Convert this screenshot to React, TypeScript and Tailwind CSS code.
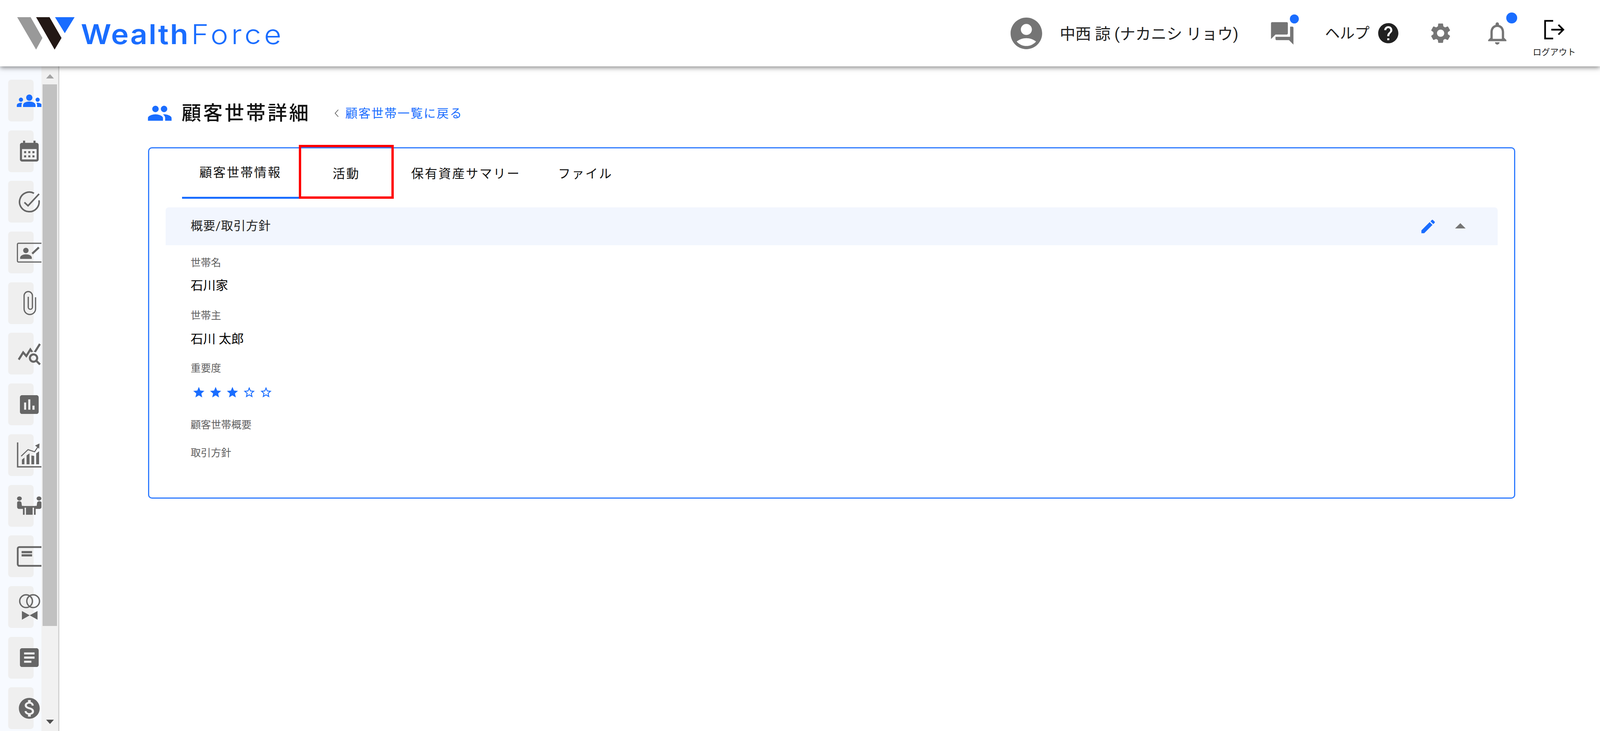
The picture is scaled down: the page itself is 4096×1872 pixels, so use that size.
import type { ReactNode } from "react";

const FONT = { jp: "font-['Roboto','Noto_Sans_CJK_JP',sans-serif]" };

function Mui({ d, className }: { d: string; className: string }) {
  return (
    <svg viewBox="0 0 24 24" fill="currentColor" className={`shrink-0 ${className}`}>
      <path d={d} />
    </svg>
  );
}

const PATHS = {
  account:
    "M12 2C6.48 2 2 6.48 2 12s4.48 10 10 10 10-4.48 10-10S17.52 2 12 2zm0 4c1.93 0 3.5 1.57 3.5 3.5S13.93 13 12 13s-3.5-1.57-3.5-3.5S10.07 6 12 6zm0 14c-2.03 0-4.43-.82-6.14-2.88C7.55 15.8 9.68 15 12 15s4.45.8 6.14 2.12C16.43 19.18 14.03 20 12 20z",
  forum:
    "M21 6h-2v9H6v2c0 .55.45 1 1 1h11l4 4V7c0-.55-.45-1-1-1zm-4 6V3c0-.55-.45-1-1-1H3c-.55 0-1 .45-1 1v14l4-4h10c.55 0 1-.45 1-1z",
  help:
    "M12 2C6.48 2 2 6.48 2 12s4.48 10 10 10 10-4.48 10-10S17.52 2 12 2zm1 17h-2v-2h2v2zm2.07-7.75l-.9.92C13.45 12.9 13 13.5 13 15h-2v-.5c0-1.1.45-2.1 1.17-2.83l1.24-1.26c.37-.36.59-.86.59-1.41 0-1.1-.9-2-2-2s-2 .9-2 2H8c0-2.21 1.79-4 4-4s4 1.79 4 4c0 .88-.36 1.68-.93 2.25z",
  settings:
    "M19.14 12.94c.04-.3.06-.61.06-.94 0-.32-.02-.64-.07-.94l2.03-1.58c.18-.14.23-.41.12-.61l-1.92-3.32c-.12-.22-.37-.29-.59-.22l-2.39.96c-.5-.38-1.03-.7-1.62-.94l-.36-2.54c-.04-.24-.24-.41-.48-.41h-3.84c-.24 0-.43.17-.47.41l-.36 2.54c-.59.24-1.13.57-1.62.94l-2.39-.96c-.22-.08-.47 0-.59.22L2.74 8.87c-.12.21-.08.47.12.61l2.03 1.58c-.05.3-.09.63-.09.94s.02.64.07.94l-2.03 1.58c-.18.14-.23.41-.12.61l1.92 3.32c.12.22.37.29.59.22l2.39-.96c.5.38 1.03.7 1.62.94l.36 2.54c.05.24.24.41.48.41h3.84c.24 0 .44-.17.47-.41l.36-2.54c.59-.24 1.13-.56 1.62-.94l2.39.96c.22.08.47 0 .59-.22l1.92-3.32c.12-.22.07-.47-.12-.61l-2.01-1.58zM12 15.6c-1.98 0-3.6-1.62-3.6-3.6s1.62-3.6 3.6-3.6 3.6 1.62 3.6 3.6-1.62 3.6-3.6 3.6z",
  bell:
    "M12 22c1.1 0 2-.9 2-2h-4c0 1.1.9 2 2 2zm6-6v-5c0-3.07-1.63-5.64-4.5-6.32V4c0-.83-.67-1.5-1.5-1.5s-1.5.67-1.5 1.5v.68C7.64 5.36 6 7.92 6 11v5l-2 2v1h16v-1l-2-2zm-2 1H8v-6c0-2.48 1.51-4.5 4-4.5s4 2.02 4 4.5v6z",
  people:
    "M16 11c1.66 0 2.99-1.34 2.99-3S17.66 5 16 5c-1.66 0-3 1.34-3 3s1.34 3 3 3zm-8 0c1.66 0 2.99-1.34 2.99-3S9.66 5 8 5C6.34 5 5 6.34 5 8s1.34 3 3 3zm0 2c-2.33 0-7 1.17-7 3.5V19h14v-2.5c0-2.33-4.67-3.5-7-3.5zm8 0c-.29 0-.62.02-.97.05 1.16.84 1.97 1.97 1.97 3.45V19h6v-2.5c0-2.33-4.67-3.5-7-3.5z",
  groups:
    "M12 12.75c1.63 0 3.07.39 4.24.9 1.08.48 1.76 1.56 1.76 2.73V18H6v-1.61c0-1.18.68-2.26 1.76-2.73 1.17-.52 2.61-.91 4.24-.91zM4 13c1.1 0 2-.9 2-2s-.9-2-2-2-2 .9-2 2 .9 2 2 2zm1.13 1.1c-.37-.06-.74-.1-1.13-.1-.99 0-1.93.21-2.78.58C.48 14.9 0 15.62 0 16.43V18h4.5v-1.61c0-.83.23-1.61.63-2.29zM20 13c1.1 0 2-.9 2-2s-.9-2-2-2-2 .9-2 2 .9 2 2 2zm4 3.43c0-.81-.48-1.53-1.22-1.85-.85-.37-1.79-.58-2.78-.58-.39 0-.76.04-1.13.1.4.68.63 1.46.63 2.29V18H24v-1.57zM12 6c1.66 0 3 1.34 3 3s-1.34 3-3 3-3-1.34-3-3 1.34-3 3-3z",
  calendar:
    "M19 4h-1V2h-2v2H8V2H6v2H5c-1.11 0-1.99.9-1.99 2L3 20c0 1.1.89 2 2 2h14c1.1 0 2-.9 2-2V6c0-1.1-.9-2-2-2zm0 16H5V10h14v10zM9 14H7v-2h2v2zm4 0h-2v-2h2v2zm4 0h-2v-2h2v2zm-8 4H7v-2h2v2zm4 0h-2v-2h2v2zm4 0h-2v-2h2v2z",
  query:
    "M19.88 18.47c.44-.7.7-1.51.7-2.39 0-2.49-2.01-4.5-4.5-4.5s-4.5 2.01-4.5 4.5 2.01 4.5 4.49 4.5c.88 0 1.7-.26 2.39-.7L21.58 23 23 21.58l-3.12-3.11zm-3.8.11c-1.38 0-2.5-1.12-2.5-2.5s1.12-2.5 2.5-2.5 2.5 1.12 2.5 2.5-1.12 2.5-2.5 2.5zm-.36-8.5c-.74.02-1.45.18-2.1.45l-.55-.83-3.8 6.18-3.01-3.52-3.63 5.81L1 17l5-8 3 3.5L13 6l2.72 4.08zm2.59.5c-.64-.28-1.33-.45-2.05-.49L21.38 2 23 3.18l-4.69 7.4z",
  assessment:
    "M19 3H5c-1.1 0-2 .9-2 2v14c0 1.1.9 2 2 2h14c1.1 0 2-.9 2-2V5c0-1.1-.9-2-2-2zM9 17H7v-7h2v7zm4 0h-2V7h2v10zm4 0h-2v-4h2v4z",
  article:
    "M19 3H5c-1.1 0-2 .9-2 2v14c0 1.1.9 2 2 2h14c1.1 0 2-.9 2-2V5c0-1.1-.9-2-2-2zm-5 14H7v-2h7v2zm3-4H7v-2h10v2zm0-4H7V7h10v2z",
  dollar:
    "M12 2C6.48 2 2 6.48 2 12s4.48 10 10 10 10-4.48 10-10S17.52 2 12 2zm1.41 16.09V20h-2.67v-1.93c-1.71-.36-3.16-1.46-3.27-3.4h1.96c.1 1.05.82 1.87 2.65 1.87 1.96 0 2.4-.98 2.4-1.59 0-.83-.44-1.61-2.67-2.14-2.48-.6-4.18-1.62-4.18-3.67 0-1.72 1.39-2.84 3.11-3.21V4h2.67v1.95c1.86.45 2.79 1.86 2.85 3.39H14.3c-.05-1.11-.64-1.87-2.22-1.87-1.5 0-2.4.68-2.4 1.64 0 .84.65 1.39 2.67 1.91s4.18 1.39 4.18 3.91c-.01 1.83-1.38 2.83-3.12 3.16z",
  edit:
    "M3 17.25V21h3.75L17.81 9.94l-3.75-3.75L3 17.25zM20.71 7.04c.39-.39.39-1.02 0-1.41l-2.34-2.34c-.39-.39-1.02-.39-1.41 0l-1.83 1.83 3.75 3.75 1.83-1.83z",
  dropUp: "M7 14l5-5 5 5z",
  star: "M12 17.27L18.18 21l-1.64-7.03L22 9.24l-7.19-.61L12 2 9.19 8.63 2 9.24l5.46 4.73L5.82 21z",
  starBorder:
    "M22 9.24l-7.19-.62L12 2 9.19 8.63 2 9.24l5.46 4.73L5.82 21 12 17.27 18.18 21l-1.63-7.03L22 9.24zM12 15.4l-3.76 2.27 1-4.28-3.32-2.88 4.38-.38L12 6.1l1.71 4.04 4.38.38-3.32 2.88 1 4.28L12 15.4z",
};

function Custom({ children }: { children: ReactNode }) {
  return (
    <svg viewBox="0 0 24 24" overflow="visible" className="w-[64px] h-[64px] shrink-0 ml-[22px] text-[#666666]" fill="currentColor">
      {children}
    </svg>
  );
}

function SideMui({ d, blue }: { d: string; blue?: boolean }) {
  return <Mui d={d} className={`w-[64px] h-[64px] ml-[22px] ${blue ? "text-[#1a6dff]" : "text-[#666666]"}`} />;
}

const sideIcons: ReactNode[] = [
  <SideMui d={PATHS.groups} blue />,
  <SideMui d={PATHS.calendar} />,
  <Custom>
    <path d="M21.3 10.5A9.4 9.4 0 1 1 16.5 3.75" fill="none" stroke="currentColor" strokeWidth="1.5" />
    <path d="M7.3 12.5l3.5 3.2L21.4 4.4" fill="none" stroke="currentColor" strokeWidth="1.5" />
  </Custom>,
  <Custom>
    <rect x="0.6" y="3" width="26" height="18" rx="1" fill="none" stroke="currentColor" strokeWidth="1.1" />
    <circle cx="8.7" cy="9.9" r="2.6" />
    <path d="M3.2 18v-1.2c0-2 3-3.2 5.6-3.2s5.6 1.2 5.6 3.2V18z" />
    <path d="M14.8 13l6.4-6" fill="none" stroke="currentColor" strokeWidth="1.9" />
  </Custom>,
  <Custom>
    <path d="M18 6.5v11a5.5 5.5 0 0 1-11 0V5a4 4 0 0 1 8 0v11a2 2 0 0 1-4 0V6" fill="none" stroke="currentColor" strokeWidth="1.2" />
  </Custom>,
  <SideMui d={PATHS.query} />,
  <SideMui d={PATHS.assessment} />,
  <Custom>
    <path d="M.8 0V23.4H25" fill="none" stroke="currentColor" strokeWidth="1.3" />
    <path d="M4.9 16.5l2.4-1.9V21H4.9zM9.4 12.5l2.8-2V21H9.400zM14 12.6l2.7.3V21H14zM18.600 10.500l2.800-2V21h-2.800z" />
    <path d="M4.2 13.200l6.600-6.300 6.300 2.100 3-4.500" fill="none" stroke="currentColor" strokeWidth="1" />
    <path d="M17.500 3l4.300-2-.3 5z" />
  </Custom>,
  <Custom>
    <ellipse cx="2.500" cy="5.100" rx="2.300" ry="2" />
    <ellipse cx="21.300" cy="5.100" rx="2.300" ry="2" />
    <path d="M.3 9.200c0-2 3.900-2 4.200 0l.4 3h1.500c.7 0 1.100.4 1.100 1v7.500H5.900v-5.600H2.300c-1.200 0-2-.8-2-2z" />
    <path d="M23.700 9.200c0-2-3.900-2-4.200 0l-.4 3h-1.500c-.7 0-1.100.4-1.100 1v7.500h1.600v-5.600h3.600c1.200 0 2-.8 2-2z" />
    <rect x="7" y="12.300" width="10" height="1.600" />
    <rect x="8.800" y="13.900" width="6.400" height="6.800" />
  </Custom>,
  <Custom>
    <rect x="0.900" y="3" width="26" height="18" rx="1.500" fill="none" stroke="currentColor" strokeWidth="1.700" />
    <rect x="4.600" y="6.800" width="10.100" height="2.100" />
    <rect x="4.600" y="9.900" width="10.100" height="2.100" />
  </Custom>,
  <Custom>
    <circle cx="8.900" cy="6.600" r="6.100" fill="none" stroke="currentColor" strokeWidth="1.300" />
    <circle cx="15.700" cy="6.600" r="6.100" fill="none" stroke="currentColor" strokeWidth="1.300" />
    <path d="M4.900 16l7.500 4.200-7.500 4.200zM19.900 16l-7.500 4.200 7.500 4.200z" />
  </Custom>,
  <SideMui d={PATHS.article} />,
  <SideMui d={PATHS.dollar} />,
];

function Header() {
  return (
    <header className="relative z-10 h-[170px] shrink-0 bg-white flex items-center justify-between pl-[44px] pr-[64px] shadow-[0_3px_12px_rgba(0,0,0,0.5)]">
      <div className="flex items-center">
        <svg viewBox="47 46 158 89" className="w-[147px] h-[83px] shrink-0">
          <polygon points="47,46 84,46 116.500,103 99,135" fill="#999999" />
          <polygon points="99,46 136,46 169,103 150,135" fill="#231815" />
          <polygon points="151,46 205,46 178,90" fill="#1a6dff" />
        </svg>
        <div className="ml-[16px] mt-[6px] flex origin-left scale-x-[1.09] text-[#1a6dff] text-[70px] leading-none font-['Inter',sans-serif]">
          <span className="font-semibold tracking-[3px]">Wealth</span>
          <span className="ml-[4px] font-light tracking-[7px]">Force</span>
        </div>
      </div>
      <div className={`flex items-center ${FONT.jp} text-[#212121]`}>
        <Mui d={PATHS.account} className="w-[97px] h-[97px] text-[#757575]" />
        <span className="ml-[37px] w-[457px] mt-[6px] whitespace-nowrap text-[40px] leading-none">中西 諒 (ナカニシ リョウ)</span>
        <div className="relative ml-[78px]">
          <Mui d={PATHS.forum} className="w-[69px] h-[69px] text-[#757575]" />
          <span className="absolute top-[-14px] right-[-8px] w-[23px] h-[23px] rounded-full bg-[#1a6dff]" />
        </div>
        <span className="ml-[75px] w-[115px] whitespace-nowrap text-[38px] leading-none">ヘルプ</span>
        <Mui d={PATHS.help} className="ml-[16px] w-[62px] h-[62px] text-[#212121]" />
        <Mui d={PATHS.settings} className="ml-[72px] w-[62px] h-[62px] text-[#757575]" />
        <div className="relative ml-[79px]">
          <Mui d={PATHS.bell} className="w-[70px] h-[70px] text-[#757575]" />
          <span className="absolute top-[-18px] right-[-16px] w-[28px] h-[28px] rounded-full bg-[#1a6dff]" />
        </div>
        <div className="ml-[58px] w-[106px] mt-[26px] flex flex-col items-center">
          <svg viewBox="0 0 56 52" className="w-[54px] h-[50px]" fill="none" stroke="#000000" strokeWidth="4.500">
            <path d="M25 2.500H3.500v47H25" />
            <path d="M20 26h32M39 13l13 13-13 13" />
          </svg>
          <span className="mt-[22px] text-[22px] leading-none whitespace-nowrap">ログアウト</span>
        </div>
      </div>
    </header>
  );
}

function Sidebar() {
  return (
    <aside className="flex shrink-0">
      <div className="w-[106px] bg-[#f7faff] overflow-hidden pt-[34px] pl-[21px] flex flex-col gap-[22.7px]">
        {sideIcons.map((icon, i) => (
          <div key={i} className="w-[65px] h-[107px] shrink-0 rounded-[8px] bg-[#efefef] flex items-center">
            {icon}
          </div>
        ))}
      </div>
      <div className="w-[46px] bg-[#f1f1f1] border-r-[3px] border-[#d2d2d2] flex flex-col">
        <div className="h-[46px] flex items-center justify-center pt-[4px]">
          <div className="w-0 h-0 border-x-[10px] border-x-transparent border-b-[11px] border-b-[#a3a3a3]" />
        </div>
        <div className="h-[1387px] mx-[3px] bg-[#c1c1c1]" />
        <div className="flex-1 flex items-end justify-center pb-[18px]">
          <div className="w-0 h-0 border-x-[10px] border-x-transparent border-t-[11px] border-t-[#505050]" />
        </div>
      </div>
    </aside>
  );
}

function Stars() {
  return (
    <div className="mt-[25px] ml-[4px] flex gap-[9px] text-[#1a6dff]">
      {[1, 2, 3, 4, 5].map((n) => (
        <Mui key={n} d={n <= 3 ? PATHS.star : PATHS.starBorder} className="w-[34px] h-[44px]" />
      ))}
    </div>
  );
}

function Label({ text, className }: { text: string; className: string }) {
  return <div className={`h-[30px] text-[26px] leading-[30px] text-[#616161] ${className}`}>{text}</div>;
}

function Value({ text, className }: { text: string; className: string }) {
  return <div className={`h-[40px] text-[32px] leading-[40px] text-black ${className}`}>{text}</div>;
}

function Card() {
  const tabs = [
    { label: "顧客世帯情報", width: "w-[299px]", active: true },
    { label: "活動", width: "w-[243px]", marked: true },
    { label: "保有資産サマリー", width: "w-[369px]" },
    { label: "ファイル", width: "w-[243px]" },
  ];
  return (
    <section className="mt-[57px] h-[900px] rounded-[10px] border-[3px] border-[#2f7bff] bg-white">
      <div className="h-[129px] pl-[84px] flex">
        {tabs.map((tab) => (
          <div
            key={tab.label}
            className={`relative ${tab.width} flex items-center justify-center text-[32px] tracking-[3px] text-[#111111] ${
              tab.active ? "border-b-[5px] border-[#1a6dff]" : ""
            }`}
          >
            {tab.label}
            {tab.marked && <div className="absolute inset-x-0 top-[-9px] bottom-0 border-[6px] border-[#ff0000]" />}
          </div>
        ))}
      </div>
      <div className="mx-[42px] mt-[22px] h-[97px] rounded-t-[8px] bg-[#f2f6fe] pl-[64px] pr-[63px] flex items-center justify-between">
        <span className="text-[31px] tracking-[1px] text-[#212121]">概要/取引方針</span>
        <div className="flex items-center">
          <Mui d={PATHS.edit} className="w-[46px] h-[46px] text-[#1a6dff]" />
          <Mui d={PATHS.dropUp} className="ml-[27px] w-[65px] h-[65px] text-[#757575]" />
        </div>
      </div>
      <div className="ml-[106px]">
        <Label text="世帯名" className="mt-[30px]" />
        <Value text="石川家" className="mt-[23px]" />
        <Label text="世帯主" className="mt-[42px]" />
        <Value text="石川 太郎" className="mt-[25px]" />
        <Label text="重要度" className="mt-[40px]" />
        <Stars />
        <Label text="顧客世帯概要" className="mt-[46px]" />
        <Label text="取引方針" className="mt-[42px]" />
      </div>
    </section>
  );
}

export default function App() {
  return (
    <div className={`w-[4096px] h-[1872px] overflow-hidden bg-white flex flex-col ${FONT.jp}`}>
      <Header />
      <div className="flex-1 flex min-h-0">
        <Sidebar />
        <main className="flex-1 pl-[227px] pr-[217px] pt-[90px]">
          <div className="h-[60px] flex items-center">
            <Mui d={PATHS.people} className="w-[66px] h-[66px] -ml-[3px] text-[#1a6dff]" />
            <h1 className="ml-[23px] text-[50px] font-medium leading-none tracking-[5px] text-[#111111] whitespace-nowrap">顧客世帯詳細</h1>
            <svg viewBox="0 0 14 22" className="ml-[60px] w-[14px] h-[22px] shrink-0" fill="none" stroke="#616161" strokeWidth="1.800">
              <path d="M11 2L3 11l8 9" />
            </svg>
            <a className="ml-[15px] text-[31px] tracking-[2.400px] leading-none text-[#1a6dff] whitespace-nowrap">顧客世帯一覧に戻る</a>
          </div>
          <Card />
        </main>
      </div>
    </div>
  );
}
